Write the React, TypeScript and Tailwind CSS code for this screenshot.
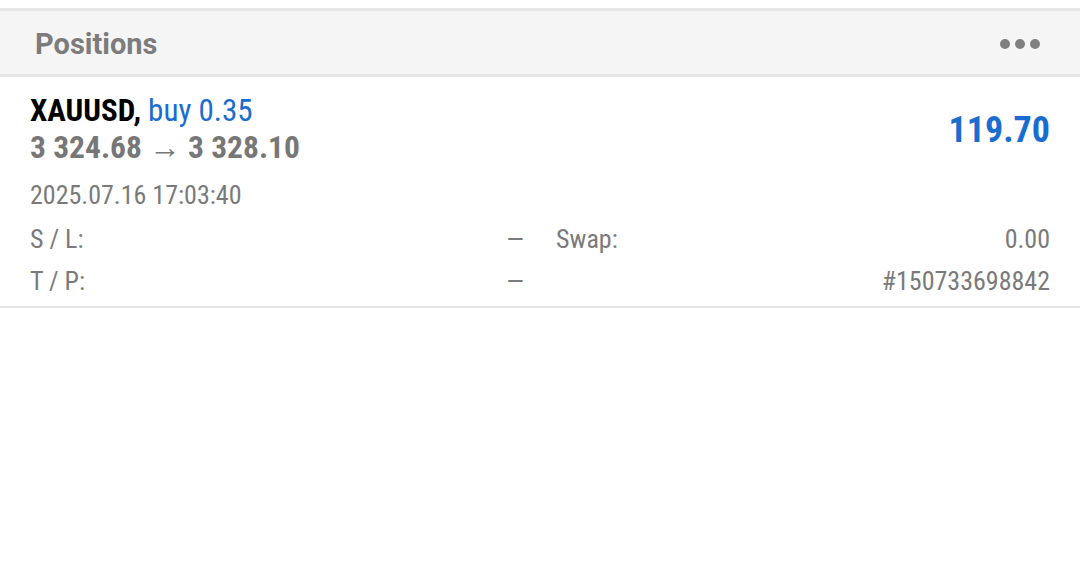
export default function App() {
  const cond = { fontFamily: "Roboto, 'Noto Sans', sans-serif", fontStretch: "75%" } as React.CSSProperties;
  return (
    <div className="w-[1080px] h-[579px] bg-white pt-2" style={{ fontFamily: "Roboto, 'Noto Sans', sans-serif" }}>
      <div className="h-[69px] bg-[#f5f5f5] border-t-[3px] border-b-[3px] border-[#e6e6e6] flex items-center justify-between pl-[35px] pr-[40px] pt-[4px]">
        <span className="text-[29px] font-bold text-[#7c7c7c] leading-none">Positions</span>
        <div className="flex gap-[5px] -mt-[2px]">
          <span className="w-[10px] h-[10px] rounded-full bg-[#808080]" />
          <span className="w-[10px] h-[10px] rounded-full bg-[#808080]" />
          <span className="w-[10px] h-[10px] rounded-full bg-[#808080]" />
        </div>
      </div>
      <div className="border-b-2 border-[#e6e6e6] pl-[30px] pr-[30px] pt-[16px] pb-[4px]" style={cond}>
        <div className="flex justify-between items-center">
          <div className="flex flex-col">
            <div className="text-[31px] leading-[36px]">
              <span className="font-bold text-black">XAUUSD,</span>{" "}
              <span className="text-[#1a6dd0]">buy 0.35</span>
            </div>
            <div className="text-[31.5px] leading-[38px] font-bold text-[#777777]">3 324.68 → 3 328.10</div>
          </div>
          <div className="text-[36px] font-bold text-[#1a6dd0] leading-none">119.70</div>
        </div>
        <div className="text-[26px] text-[#7a7a7a] mt-[10px] leading-[36px]">2025.07.16 17:03:40</div>
        <div className="grid grid-cols-2 gap-x-[32px] text-[26px] text-[#7a7a7a] leading-[42px] mt-[5px]">
          <div className="flex justify-between"><span>S / L:</span><span>—</span></div>
          <div className="flex justify-between"><span>Swap:</span><span>0.00</span></div>
          <div className="flex justify-between"><span>T / P:</span><span>—</span></div>
          <div className="flex justify-end"><span>#150733698842</span></div>
        </div>
      </div>
    </div>
  );
}
